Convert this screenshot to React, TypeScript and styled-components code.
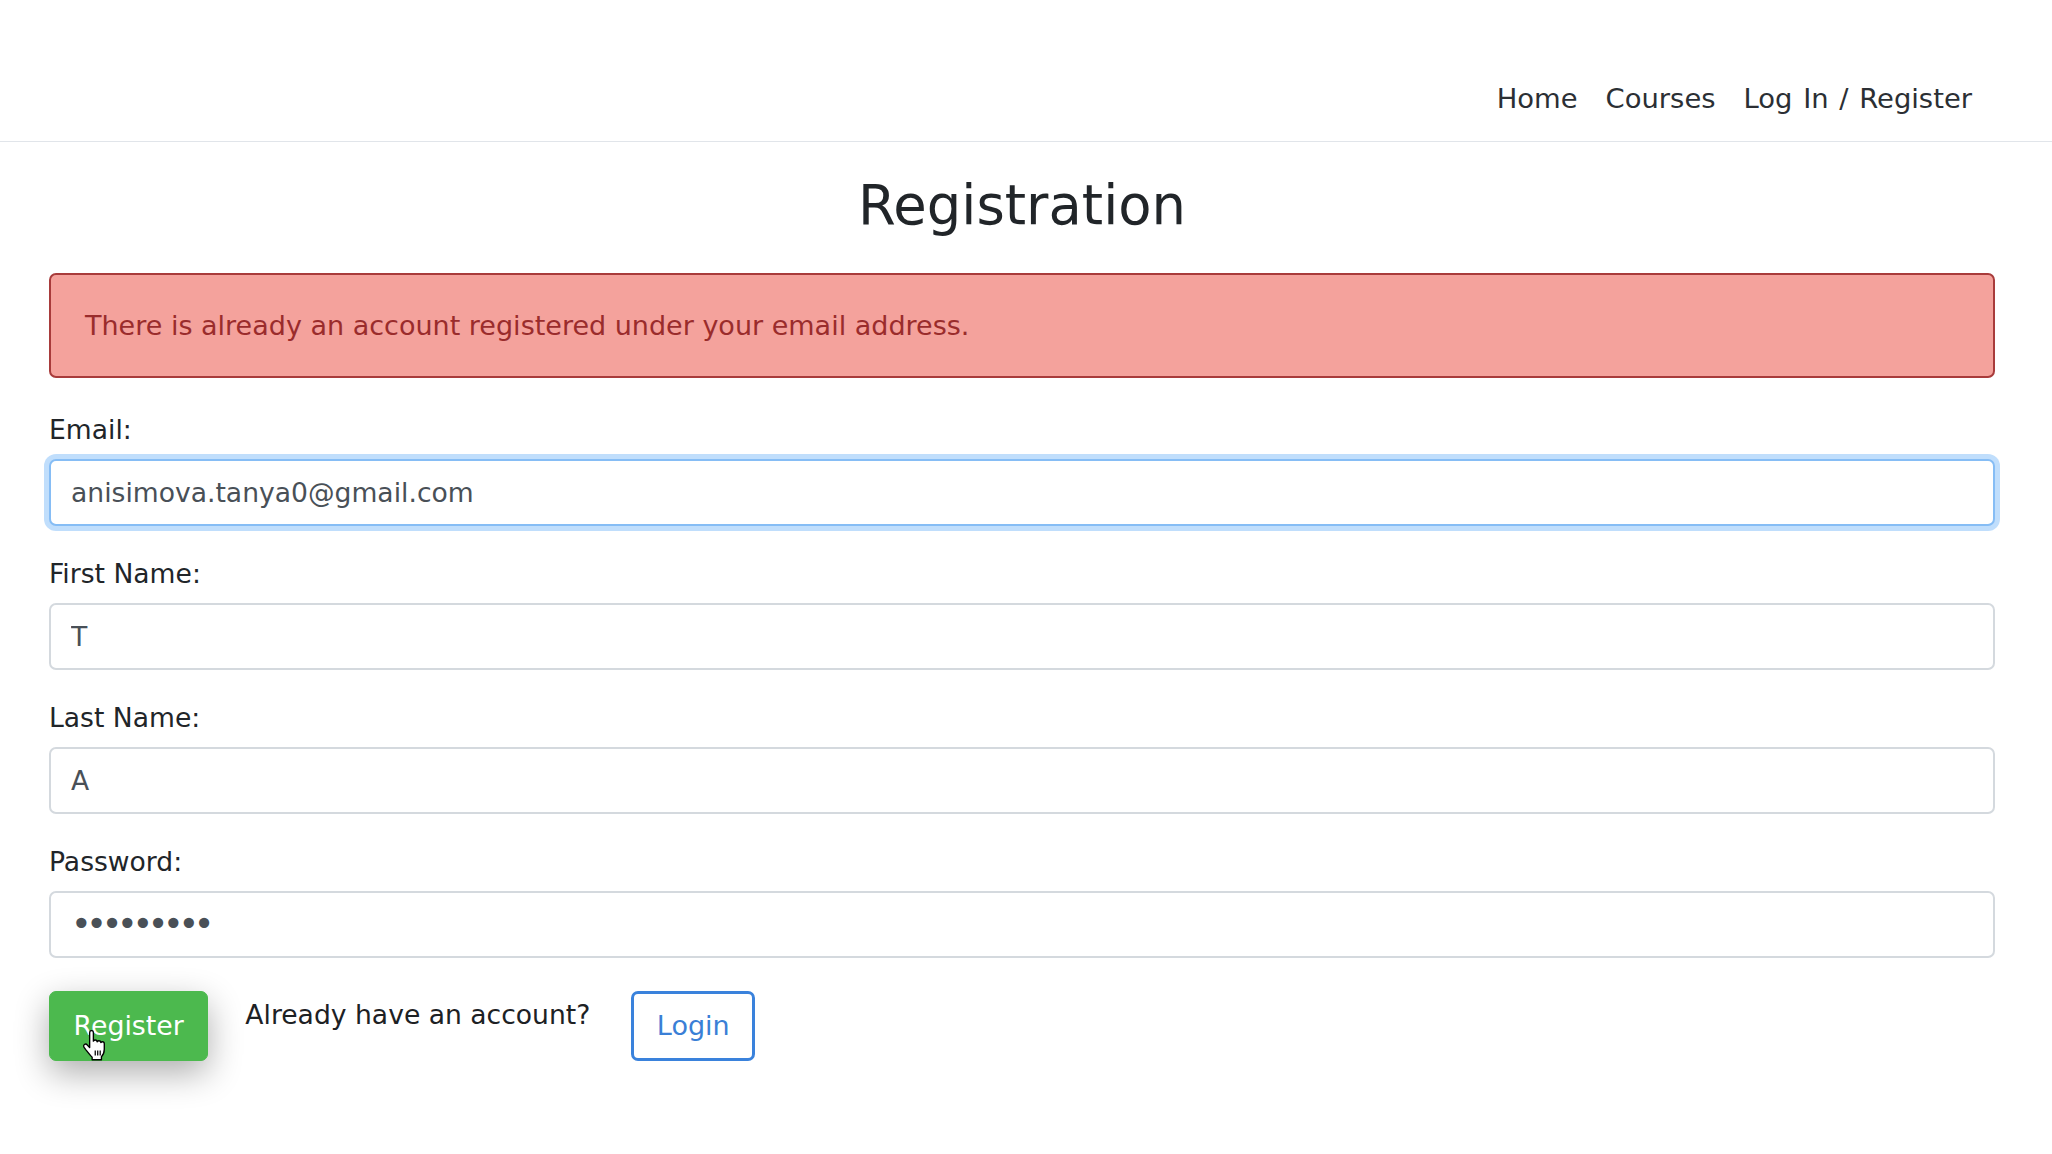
import React from "react";
import styled, { createGlobalStyle } from "styled-components";

const GlobalStyle = createGlobalStyle`
  html, body {
    margin: 0;
    padding: 0;
    background: #ffffff;
  }
  body {
    min-height: 100vh;
    font-family: "DejaVu Sans", "Noto Sans", sans-serif;
    font-size: 26.6px;
    line-height: 40px;
    color: #212529;
  }
  * { box-sizing: border-box; }
`;

const NavBar = styled.nav`
  height: 142px;
  border-bottom: 1px solid #e1e5ea;
  display: flex;
  justify-content: flex-end;
  align-items: flex-end;
  padding: 0 80px 22px 0;
  gap: 28px;
`;

const NavLink = styled.a`
  color: #2b2f34;
  text-decoration: none;
  font-size: 27.4px;
  line-height: 40px;
  word-spacing: 2px;
  white-space: nowrap;
`;

const Main = styled.main`
  padding: 0 57px 90px 49px;
`;

const Title = styled.h2`
  margin: 30.5px 0 35px;
  font-size: 54.4px;
  line-height: 1.2;
  font-weight: 500;
  text-align: center;
  color: #212529;
`;

const Alert = styled.div`
  border: 2px solid #a83b3b;
  border-radius: 7px;
  background: #f4a29c;
  color: #9a2c2c;
  font-size: 27px;
  padding: 31px 34px 30.5px;
  margin-bottom: 31.5px;
`;

const Group = styled.div`
  margin-bottom: 28px;
`;

const Label = styled.label`
  display: block;
  margin-bottom: 9px;
  color: #212529;
`;

const Input = styled.input<{ $focused?: boolean; $secret?: boolean }>`
  display: block;
  width: 100%;
  height: 67px;
  padding: 0 20px;
  font-family: "DejaVu Sans", "Noto Sans", sans-serif;
  font-size: ${(p) => (p.$secret ? "35px" : "26.6px")};
  letter-spacing: ${(p) => (p.$secret ? "-5.3px" : "normal")};
  color: #495057;
  background: #fff;
  border: 2px solid ${(p) => (p.$focused ? "#86bdf5" : "#d4d9de")};
  border-radius: 7px;
  outline: none;
  box-shadow: ${(p) => (p.$focused ? "0 0 0 5px rgba(140, 195, 250, 0.55)" : "none")};
`;

const Actions = styled.div`
  display: flex;
  align-items: flex-start;
  margin-top: 33.5px;
`;

const CursorWrap = styled.div`
  position: relative;
`;

const SuccessButton = styled.button`
  height: 70px;
  padding: 0 23.5px;
  border: 1px solid #4cb94e;
  border-radius: 7px;
  background: #4cb94e;
  color: #ffffff;
  font-family: "DejaVu Sans", "Noto Sans", sans-serif;
  font-size: 26.8px;
  line-height: 40px;
  box-shadow: 0 12px 34px rgba(0, 0, 0, 0.32);
  cursor: pointer;
`;

const Prompt = styled.span`
  margin: 4px 41px 0 37px;
  white-space: nowrap;
  color: #1d2124;
`;

const OutlineButton = styled.button`
  height: 70px;
  padding: 0 22.5px;
  border: 3px solid #3a82dc;
  border-radius: 7px;
  background: #ffffff;
  color: #3a7fd6;
  font-family: "DejaVu Sans", "Noto Sans", sans-serif;
  font-size: 27px;
  line-height: 40px;
  cursor: pointer;
`;

const Cursor = styled.svg`
  position: absolute;
  left: 32px;
  top: 39px;
  width: 26px;
  height: 31px;
  pointer-events: none;
`;

const HandCursor = () => (
  <Cursor viewBox="0 0 20 25">
    <path
      d="M6.5 2.2 C6.5 1.2 7.2 0.5 8 0.5 C8.8 0.5 9.5 1.2 9.5 2.2 L9.5 9 C9.8 8.4 10.4 8.1 11 8.1 C11.8 8.1 12.4 8.7 12.5 9.5 C12.8 9 13.4 8.7 14 8.7 C14.8 8.7 15.4 9.3 15.5 10.1 C15.8 9.7 16.3 9.5 16.8 9.5 C17.7 9.5 18.3 10.2 18.3 11 L18.3 15.5 C18.3 18.5 17 20.5 16 21.5 L16 24 L8.5 24 L8.5 22 C7.5 21 5.5 18.5 3.5 16 L2 14 C1.4 13.2 1.6 12.2 2.3 11.7 C3 11.2 4 11.4 4.6 12.1 L6.5 14.2 Z"
      fill="#ffffff"
      stroke="#000000"
      strokeWidth="1.1"
      strokeLinejoin="round"
    />
    <path d="M11 16.5 V20.5 M13 16.5 V20.5 M15 16.5 V20.5" stroke="#000" strokeWidth="1" />
  </Cursor>
);

export default function App() {
  return (
    <>
      <GlobalStyle />
      <NavBar>
        <NavLink href="#">Home</NavLink>
        <NavLink href="#">Courses</NavLink>
        <NavLink href="#">Log In / Register</NavLink>
      </NavBar>
      <Main>
        <Title>Registration</Title>
        <Alert>There is already an account registered under your email address.</Alert>
        <form onSubmit={(e) => e.preventDefault()}>
          <Group>
            <Label htmlFor="email">Email:</Label>
            <Input id="email" type="email" $focused defaultValue="anisimova.tanya0@gmail.com" />
          </Group>
          <Group>
            <Label htmlFor="first">First Name:</Label>
            <Input id="first" type="text" defaultValue="T" />
          </Group>
          <Group>
            <Label htmlFor="last">Last Name:</Label>
            <Input id="last" type="text" defaultValue="A" />
          </Group>
          <Group>
            <Label htmlFor="password">Password:</Label>
            <Input id="password" type="password" $secret defaultValue="123456789" />
          </Group>
          <Actions>
            <CursorWrap>
              <SuccessButton type="submit">Register</SuccessButton>
              <HandCursor />
            </CursorWrap>
            <Prompt>Already have an account?</Prompt>
            <OutlineButton type="button">Login</OutlineButton>
          </Actions>
        </form>
      </Main>
    </>
  );
}
